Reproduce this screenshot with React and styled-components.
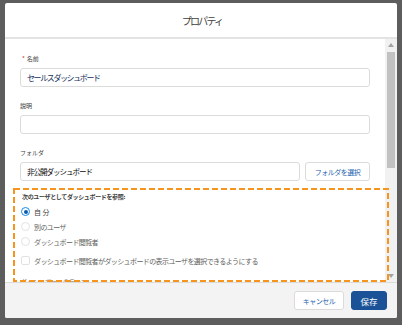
import React from "react";
import styled, { createGlobalStyle } from "styled-components";

const Global = createGlobalStyle`
  html, body { margin: 0; padding: 0; background: #5d5d5d; height: 100%; }
  body { font-family: "Noto Sans CJK JP", "Noto Sans", sans-serif; }
  #root { height: 100%; }
`;

const Modal = styled.div`
  position: relative;
  box-sizing: border-box;
  margin: 3px 0 0 5px;
  width: 392px;
  height: 315px;
  background: #fff;
  display: flex;
  flex-direction: column;
  overflow: hidden;
  border-radius: 2px;
`;

const Header = styled.div`
  flex: none;
  height: 34px;
  border-bottom: 2px solid #e3e3e3;
  display: flex;
  align-items: center;
  justify-content: center;
`;

const Title = styled.h2`
  margin: 0 0 0 2px;
  font-size: 10px;
  font-weight: 400;
  letter-spacing: -1.8px;
  color: #3e3e3c;
`;

const Body = styled.div`
  flex: 1;
  min-height: 0;
  display: flex;
`;

const Content = styled.div`
  flex: 1;
  min-width: 0;
  padding: 15px 15px 0 15px;
  display: flex;
  flex-direction: column;
  overflow: hidden;
`;

const Field = styled.div`
  display: flex;
  flex-direction: column;
  margin-bottom: ${(p) => p.$mb ?? 14}px;
`;

const Label = styled.label`
  font-size: 6px;
  line-height: 10px;
  height: 10px;
  color: #3e3e3c;
  margin-bottom: 4px;
  padding-left: ${(p) => (p.$indent ? 2 : 0)}px;
  white-space: nowrap;
`;

const Req = styled.span`
  color: #c23934;
  margin-right: 2px;
`;

const TextInput = styled.input`
  box-sizing: border-box;
  height: 19px;
  width: 100%;
  border: 1px solid #dddbda;
  border-radius: 3px;
  padding: 0 6px;
  font-family: inherit;
  font-size: ${(p) => (p.$dark ? 7.5 : 8)}px;
  letter-spacing: ${(p) => (p.$dark ? -1 : -1.4)}px;
  color: ${(p) => (p.$dark ? "#080707" : "#16325c")};
  background: #fff;
  outline: none;
`;

const Row = styled.div`
  display: flex;
  gap: 5px;
`;

const SecondaryButton = styled.button`
  flex: none;
  box-sizing: border-box;
  width: ${(p) => p.$w}px;
  height: 19px;
  border: 1px solid #dddbda;
  border-radius: 3px;
  background: #fff;
  color: #1f5fae;
  font-family: inherit;
  font-size: 7px;
  letter-spacing: -0.5px;
  padding: 0;
  display: flex;
  align-items: center;
  justify-content: center;
`;

const PrimaryButton = styled(SecondaryButton)`
  background: #1b5297;
  border-color: #1b5297;
  color: #fff;
  font-size: 8.5px;
  letter-spacing: 0;
`;

const SectionTitle = styled.div`
  padding-left: 2px;
  font-size: 6px;
  line-height: 10px;
  font-weight: 700;
  letter-spacing: -0.35px;
  color: #3e3e3c;
  white-space: nowrap;
`;

const Options = styled.div`
  margin-top: 2px;
  display: flex;
  flex-direction: column;
`;

const OptionRow = styled.div`
  height: 15px;
  display: flex;
  align-items: center;
  gap: 4px;
  padding-left: 1px;
  margin-top: ${(p) => p.$mt || 0}px;
`;

const Radio = styled.span`
  box-sizing: border-box;
  width: 9px;
  height: 9px;
  border-radius: 50%;
  border: 1px solid ${(p) => (p.$on ? "#1589ee" : "#e3e2e0")};
  background: #fff;
  display: flex;
  align-items: center;
  justify-content: center;
  flex: none;
  &::after {
    content: "";
    display: ${(p) => (p.$on ? "block" : "none")};
    width: 4px;
    height: 4px;
    border-radius: 50%;
    background: #0b5cab;
  }
`;

const Checkbox = styled.span`
  box-sizing: border-box;
  width: 9px;
  height: 9px;
  border-radius: 2px;
  border: 1px solid #e3e2e0;
  background: #fff;
  flex: none;
`;

const OptionText = styled.span`
  font-size: 7px;
  letter-spacing: ${(p) => (p.$wide ? 1.5 : -0.6)}px;
  color: ${(p) => (p.$strong ? "#3e3e3c" : "#625f5d")};
  white-space: nowrap;
`;

const ClippedLabel = styled(Label)`
  margin-top: 9px;
  padding-left: 1px;
  color: #6b6967;
`;

const Scrollbar = styled.div`
  flex: none;
  width: 12px;
  background: #f1f1f1;
  display: flex;
  flex-direction: column;
  align-items: center;
`;

const ArrowBox = styled.div`
  height: 12px;
  display: flex;
  align-items: center;
  justify-content: center;
  flex: none;
`;

const Thumb = styled.div`
  width: 8px;
  height: 116px;
  margin-top: 1px;
  background: #c1c1c1;
  flex: none;
`;

const Spacer = styled.div`
  flex: 1;
`;

const Footer = styled.div`
  flex: none;
  box-sizing: border-box;
  height: 36px;
  border-top: 1px solid #dddbda;
  background: #f3f3f3;
  display: flex;
  align-items: center;
  justify-content: flex-end;
  gap: 7px;
  padding-right: 10px;
`;

const Annotation = styled.svg`
  position: absolute;
  left: 8px;
  top: 185px;
  pointer-events: none;
`;

const Arrow = ({ down }) => (
  <svg width="6" height="4" viewBox="0 0 6 4">
    <path d={down ? "M0 0 H6 L3 4 Z" : "M0 4 H6 L3 0 Z"} fill="#a3a3a3" />
  </svg>
);

export default function App() {
  return (
    <>
      <Global />
      <Modal>
        <Header>
          <Title>プロパティ</Title>
        </Header>
        <Body>
          <Content>
            <Field>
              <Label $indent>
                <Req>*</Req>名前
              </Label>
              <TextInput readOnly defaultValue="セールスダッシュボード" />
            </Field>
            <Field>
              <Label>説明</Label>
              <TextInput readOnly defaultValue="" />
            </Field>
            <Field $mb={11}>
              <Label>フォルダ</Label>
              <Row>
                <TextInput $dark readOnly defaultValue="非公開ダッシュボード" />
                <SecondaryButton $w={65}>フォルダを選択</SecondaryButton>
              </Row>
            </Field>
            <SectionTitle>次のユーザとしてダッシュボードを参照:</SectionTitle>
            <Options>
              <OptionRow>
                <Radio $on />
                <OptionText $strong $wide>自分</OptionText>
              </OptionRow>
              <OptionRow>
                <Radio />
                <OptionText>別のユーザ</OptionText>
              </OptionRow>
              <OptionRow>
                <Radio />
                <OptionText>ダッシュボード閲覧者</OptionText>
              </OptionRow>
              <OptionRow $mt={4}>
                <Checkbox />
                <OptionText>
                  ダッシュボード閲覧者がダッシュボードの表示ユーザを選択できるようにする
                </OptionText>
              </OptionRow>
            </Options>
            <ClippedLabel>ダッシュボードのテーマ</ClippedLabel>
          </Content>
          <Scrollbar>
            <ArrowBox>
              <Arrow />
            </ArrowBox>
            <Thumb />
            <Spacer />
            <ArrowBox>
              <Arrow down />
            </ArrowBox>
          </Scrollbar>
        </Body>
        <Footer>
          <SecondaryButton $w={50}>キャンセル</SecondaryButton>
          <PrimaryButton $w={36}>保存</PrimaryButton>
        </Footer>
        <Annotation width="376" height="94" viewBox="0 0 376 94">
          <rect
            x="1"
            y="1"
            width="374"
            height="92"
            fill="none"
            stroke="#f7941d"
            strokeWidth="2"
            strokeDasharray="6 3"
          />
        </Annotation>
      </Modal>
    </>
  );
}
